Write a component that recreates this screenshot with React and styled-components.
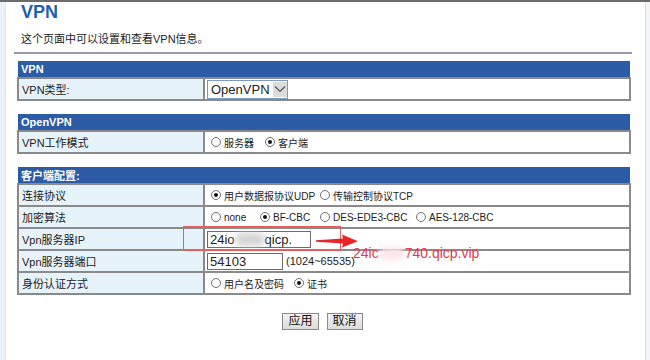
import React from 'react'
import styled, { createGlobalStyle } from 'styled-components'

const GlobalStyle = createGlobalStyle`
  html, body {
    margin: 0;
    padding: 0;
    background: #ffffff;
  }
  body {
    font-family: "Liberation Sans", "Noto Sans CJK SC", sans-serif;
    font-size: 12px;
    color: #222;
  }
`

// $w = distance to the next radio, as laid out in the router page
function Radio({ checked, label, w }) {
    return (
        <RadioItem $w={w}>
            <RadioCircle checked={checked} />
            {label}
        </RadioItem>
    )
}

function Section({ title, children }) {
    return (
        <Table>
            <tbody>
                <tr>
                    <HeaderCell colSpan={2}>{title}</HeaderCell>
                </tr>
                {children}
            </tbody>
        </Table>
    )
}

function App() {
    return (
        <Page>
            <GlobalStyle />
            <LeftStrip />
            <Main>
                <Title>VPN</Title>
                <Desc>这个页面中可以设置和查看VPN信息。</Desc>
                <Rule />

                <Section title="VPN">
                    <tr>
                        <LabelCell>VPN类型:</LabelCell>
                        <ValueCell>
                            <Select>
                                OpenVPN
                                <Chevron>
                                    <svg width="12" height="8" viewBox="0 0 12 8">
                                        <path d="M1 1.5 L6 6.5 L11 1.5" fill="none" stroke="#555" strokeWidth="1.2" />
                                    </svg>
                                </Chevron>
                            </Select>
                        </ValueCell>
                    </tr>
                </Section>

                <Section title="OpenVPN">
                    <tr>
                        <LabelCell>VPN工作模式</LabelCell>
                        <ValueCell>
                            <Radios>
                                <Radio w={54} label="服务器" />
                                <Radio checked label="客户端" />
                            </Radios>
                        </ValueCell>
                    </tr>
                </Section>

                <Section title="客户端配置:">
                    <tr>
                        <LabelCell>连接协议</LabelCell>
                        <ValueCell>
                            <Radios>
                                <Radio w={109} checked label="用户数据报协议UDP" />
                                <Radio label="传输控制协议TCP" />
                            </Radios>
                        </ValueCell>
                    </tr>
                    <tr>
                        <LabelCell>加密算法</LabelCell>
                        <ValueCell>
                            <Radios>
                                <Radio w={49} label="none" />
                                <Radio w={60} checked label="BF-CBC" />
                                <Radio w={96} label="DES-EDE3-CBC" />
                                <Radio label="AES-128-CBC" />
                            </Radios>
                        </ValueCell>
                    </tr>
                    <tr>
                        <LabelCell>Vpn服务器IP</LabelCell>
                        <ValueCell>
                            <TextInput $width={104}>
                                24io<Smudge $w={30} $dark />qicp.
                            </TextInput>
                            <RedBox />
                            <Arrow width="42" height="14" viewBox="0 0 42 14">
                                <path d="M0 6.3 L27 4.6 L26 0.5 L42 7.3 L26 13.5 L27 9.4 L0 7.8 Z" fill="#e8262a" />
                            </Arrow>
                            <Note>
                                24ic<Smudge $w={26} />740.qicp.vip
                            </Note>
                        </ValueCell>
                    </tr>
                    <tr>
                        <LabelCell>Vpn服务器端口</LabelCell>
                        <ValueCell>
                            <TextInput $width={76}>54103</TextInput>
                            <Hint>(1024~65535)</Hint>
                        </ValueCell>
                    </tr>
                    <tr>
                        <LabelCell>身份认证方式</LabelCell>
                        <ValueCell>
                            <Radios>
                                <Radio w={83} label="用户名及密码" />
                                <Radio checked label="证书" />
                            </Radios>
                        </ValueCell>
                    </tr>
                </Section>

                <Actions>
                    <Button>应用</Button>
                    <Button>取消</Button>
                </Actions>
            </Main>
            <RightStrip />
        </Page>
    )
}

export default App

const Page = styled.div`
    display: flex;
    width: 650px;
    height: 360px;
    border-top: 2px solid #6b6b6b;
    box-sizing: border-box;
`
const LeftStrip = styled.div`
    width: 5px;
    background: #eaf3fa;
    border-right: 1px solid #dde8f0;
`
const RightStrip = styled.div`
    width: 4px;
    background: #f3f6f8;
    border-left: 1px solid #dcdcdc;
`
const Main = styled.div`
    flex: 1;
    padding: 0 9px 0 11px;
`
const Title = styled.div`
    font-size: 18px;
    line-height: 20px;
    font-weight: bold;
    color: #1f60b3;
    padding-left: 4px;
`
const Desc = styled.div`
    margin-top: 9px;
    line-height: 16px;
    font-size: 11px;
    padding-left: 4px;
    color: #222;
`
const Rule = styled.div`
    margin: 5px 4px 0 -3px;
    height: 2px;
    background: #9a9aa6;
`
const Table = styled.table`
    width: 614px;
    margin-top: 7px;
    border-collapse: collapse;
    & + & {
        margin-top: 13px;
    }
`
const HeaderCell = styled.td`
    background: #2c5ca6;
    color: #fff;
    font-weight: bold;
    font-size: 11px;
    height: 16px;
    padding: 0 0 0 3px;
    border: 0;
`
const LabelCell = styled.td`
    width: 181px;
    height: 20px;
    padding: 0 0 0 3px;
    background: #e6f3fb;
    border: 2px solid #8a8a8a;
    font-size: 11px;
    color: #222;
`
const ValueCell = styled.td`
    position: relative;
    height: 20px;
    padding: 0 0 0 2px;
    border: 2px solid #8a8a8a;
    font-size: 12px;
    color: #222;
`
const Radios = styled.div`
    display: flex;
    align-items: center;
    padding-left: 4px;
`
const RadioItem = styled.span`
    display: inline-flex;
    align-items: center;
    gap: 3px;
    flex: none;
    width: ${p => (p.$w ? `${p.$w}px` : 'auto')};
    font-family: "Liberation Sans Narrow", "Liberation Sans", "Noto Sans CJK SC", sans-serif;
    font-size: 10px;
    white-space: nowrap;
`
const RadioCircle = styled.span`
    width: 10px;
    height: 10px;
    flex: none;
    border: 1px solid #6f6f6f;
    border-radius: 50%;
    box-sizing: border-box;
    display: inline-flex;
    align-items: center;
    justify-content: center;
    &::after {
        content: "";
        width: 4px;
        height: 4px;
        border-radius: 50%;
        background: ${p => (p.checked ? '#111' : 'transparent')};
    }
`
const Select = styled.div`
    display: inline-flex;
    align-items: center;
    height: 17px;
    border: 1px solid #7a9cc4;
    padding-left: 3px;
    font-size: 13px;
    gap: 3px;
    vertical-align: middle;
`
const Chevron = styled.span`
    width: 14px;
    height: 15px;
    background: #dcdcdc;
    display: inline-flex;
    align-items: center;
    justify-content: center;
`
const TextInput = styled.span`
    display: inline-flex;
    align-items: center;
    width: ${p => p.$width}px;
    height: 17px;
    box-sizing: border-box;
    border: 1px solid #6d6d6d;
    padding-left: 2px;
    font-size: 13px;
    vertical-align: middle;
    background: #fff;
`
const Smudge = styled.span`
    display: inline-block;
    width: ${p => p.$w}px;
    height: 13px;
    border-radius: 6px;
    background: ${p => (p.$dark ? '#d4d4d4' : '#fbe6e8')};
    filter: blur(3px);
`
const Hint = styled.span`
    font-size: 11px;
    margin-left: 3px;
    vertical-align: middle;
`
const RedBox = styled.span`
    position: absolute;
    left: -22px;
    top: -3px;
    width: 158px;
    height: 25px;
    border: 1.5px solid #e25c5c;
    box-sizing: border-box;
    pointer-events: none;
`
const Arrow = styled.svg`
    position: absolute;
    left: 111px;
    top: 5px;
`
const Note = styled.span`
    position: absolute;
    left: 148px;
    top: 17px;
    font-size: 14px;
    line-height: 15px;
    color: #e6394a;
    white-space: nowrap;
    display: inline-flex;
    align-items: center;
`
const Actions = styled.div`
    display: flex;
    justify-content: center;
    gap: 8px;
    margin-top: 18px;
    padding-right: 8px;
`
const Button = styled.button`
    height: 17px;
    padding: 0 5px;
    font-family: "Liberation Sans", "Noto Sans CJK SC", sans-serif;
    font-size: 12px;
    line-height: 15px;
    color: #111;
    background: linear-gradient(#f2f2f2, #dcdcdc);
    border: 1px solid #8a8a8a;
    border-radius: 0;
`
